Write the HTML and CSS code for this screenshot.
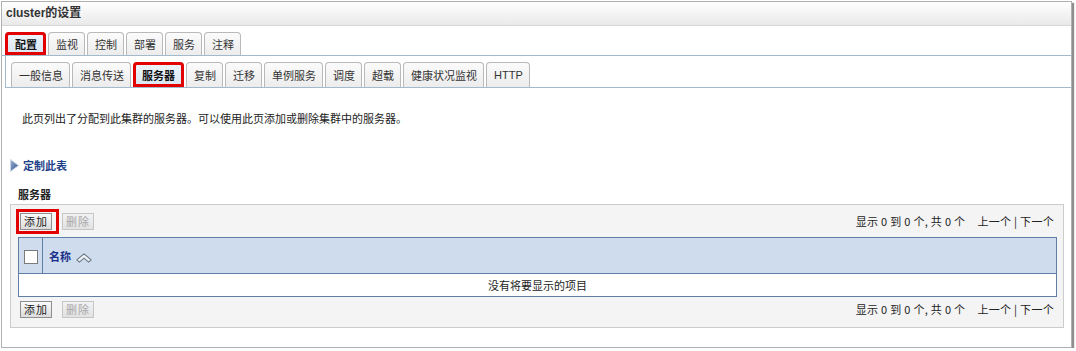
FILE: index.html
```html
<!DOCTYPE html>
<html lang="zh">
<head>
  <meta charset="UTF-8" />
  <title>cluster的设置</title>
  <link rel="stylesheet" href="styles.css">
</head>
<body>
  <div class="frame">
    <div class="title">cluster的设置</div>

    <div class="tabs">
      <div class="tab sel mark">配置</div>
      <div class="tab">监视</div>
      <div class="tab">控制</div>
      <div class="tab">部署</div>
      <div class="tab">服务</div>
      <div class="tab">注释</div>
    </div>

    <div class="subtabs">
      <div class="tab">一般信息</div>
      <div class="tab">消息传送</div>
      <div class="tab sel mark">服务器</div>
      <div class="tab">复制</div>
      <div class="tab">迁移</div>
      <div class="tab">单例服务</div>
      <div class="tab">调度</div>
      <div class="tab">超载</div>
      <div class="tab">健康状况监视</div>
      <div class="tab latin">HTTP</div>
    </div>

    <div class="content">
      <p class="desc">此页列出了分配到此集群的服务器。可以使用此页添加或删除集群中的服务器。</p>

      <div class="customize">
        <svg width="9" height="13" viewBox="0 0 9 13">
          <defs>
            <linearGradient id="tri" x1="0" y1="0" x2="1" y2="1">
              <stop offset="0" stop-color="#9db4d6"/>
              <stop offset="1" stop-color="#2d4f86"/>
            </linearGradient>
          </defs>
          <polygon points="0.5,0.5 8.5,6.5 0.5,12.5" fill="url(#tri)" stroke="#c9d4e4" stroke-width="1"/>
        </svg>
        <span>定制此表</span>
      </div>

      <h3 class="section">服务器</h3>

      <div class="panel">
        <div class="toolbar">
          <div class="buttons">
            <span class="btn-mark"><button class="btn">添加</button></span>
            <button class="btn" disabled>删除</button>
          </div>
          <div class="pager">显示 0 到 0 个, 共 0 个<span class="nav">上一个 | 下一个</span></div>
        </div>

        <table class="grid">
          <thead>
            <tr>
              <th class="check"><span class="box"></span></th>
              <th class="name">名称
                <svg width="16" height="10" viewBox="0 0 16 10">
                  <polygon points="8,0.8 15.2,6.8 12.6,9.2 8,5.2 3.4,9.2 0.8,6.8" fill="#eef1f6" stroke="#6c7888" stroke-width="1.1" stroke-linejoin="round"/>
                </svg>
              </th>
            </tr>
          </thead>
          <tbody>
            <tr><td colspan="2" class="empty">没有将要显示的项目</td></tr>
          </tbody>
        </table>

        <div class="toolbar bottom">
          <div class="buttons">
            <button class="btn">添加</button>
            <button class="btn" disabled>删除</button>
          </div>
          <div class="pager">显示 0 到 0 个, 共 0 个<span class="nav">上一个 | 下一个</span></div>
        </div>
      </div>
    </div>
  </div>
</body>
</html>
```

FILE: styles.css
```css
body {
  margin: 0;
  background: #fff;
  font-family: "Noto Sans CJK SC", "Liberation Sans", sans-serif;
  font-size: 11px;
  color: #222;
}
.frame {
  margin: 1px 0 0 1px;
  width: 1069px;
  height: 345px;
  border: 1px solid #b0b0b0;
  box-shadow: 2px 2px 1px #8e8e8e;
  background: #fff;
}
.title {
  height: 23px;
  line-height: 22px;
  padding-left: 4px;
  background: linear-gradient(#ffffff, #e9e9e9);
  border-bottom: 1px solid #d6d6d6;
  font-family: "Liberation Sans", "Noto Sans CJK SC", sans-serif;
  font-weight: bold;
  font-size: 12px;
  color: #333;
}
.tabs {
  display: flex;
  gap: 2px;
  margin-top: 5px;
  padding-left: 3px;
  border-bottom: 1px solid #a3b9cc;
  height: 24px;
  align-items: flex-end;
}
.tab {
  height: 23px;
  line-height: 22px;
  padding: 0 6px 0 7px;
  border: 1px solid #b9b9b9;
  border-bottom: none;
  border-radius: 4px 4px 0 0;
  background: linear-gradient(#fbfbfb, #ececec);
  color: #333;
  box-sizing: border-box;
}
.tab.sel {
  background: linear-gradient(#eef4fa, #d8e5f2);
  font-weight: bold;
  color: #111;
}
.tab.mark {
  outline: 3px solid #e30000;
  outline-offset: -3px;
}
.tabs .tab.mark {
  padding: 0 8px 0 9px;
}
.tab.latin {
  font-family: "Liberation Sans", sans-serif;
}
.subtabs {
  display: flex;
  gap: 2px;
  margin-left: 3px;
  padding: 6px 0 0 5px;
  height: 25px;
  border-left: 1px solid #a3b9cc;
  border-bottom: 1px solid #a3b9cc;
  align-items: flex-end;
}
.subtabs .tab {
  height: 25px;
  line-height: 24px;
}
.subtabs .tab.mark {
  padding: 0 8px;
}
.content {
  padding: 0 9px 0 9px;
}
.desc {
  margin: 20px 0 0 11px;
  height: 20px;
  line-height: 20px;
}
.customize {
  display: flex;
  align-items: center;
  gap: 4px;
  margin: 29px 0 0 -1px;
  font-weight: bold;
  color: #1e3f8a;
  font-size: 11px;
}
.section {
  margin: 12px 0 0 7px;
  height: 18px;
  line-height: 18px;
  font-size: 11px;
  font-weight: bold;
  color: #222;
}
.panel {
  margin-top: 1px;
  height: 124px;
  background: #f4f4f4;
  border: 1px solid #cccccc;
  padding: 0 6px 0 7px;
  box-sizing: border-box;
  width: 1054px;
  margin-left: -1px;
}
.toolbar {
  display: flex;
  justify-content: space-between;
  align-items: center;
  height: 32px;
  padding-left: 2px;
}
.toolbar.bottom {
  height: 28px;
  align-items: flex-start;
  padding-top: 4px;
  box-sizing: border-box;
}
.buttons {
  display: flex;
  align-items: center;
  gap: 10px;
}
.btn-mark {
  display: inline-block;
  border: 3px solid #e30000;
  padding: 1px 4px 1px 1px;
  margin: -4px -7px -4px -4px;
  line-height: 0;
}
.btn {
  width: 32px;
  height: 17px;
  padding: 0;
  font-family: "Noto Sans CJK SC", sans-serif;
  font-size: 11px;
  line-height: 15px;
  color: #222;
  background: linear-gradient(#fafafa, #dcdcdc);
  border: 1px solid #8f8f8f;
  border-radius: 0;
  letter-spacing: 1px;
}
.btn:disabled {
  color: #a8a8a8;
  border-color: #c6c6c6;
  background: linear-gradient(#f2f2f2, #e2e2e2);
}
.pager {
  padding-right: 3px;
  color: #222;
  letter-spacing: 0.3px;
}
.nav {
  margin-left: 12px;
}
.grid {
  width: 1039px;
  border-collapse: collapse;
  border: 1px solid #5f7ea6;
  background: #fff;
}
.grid th {
  height: 35px;
  background: #cfdcee;
  text-align: left;
  padding: 0;
  border-bottom: 1px solid #5f7ea6;
}
.grid th.check {
  width: 23px;
  border-right: 1px solid #5f7ea6;
  text-align: center;
}
.box {
  display: inline-block;
  width: 12px;
  height: 12px;
  border: 1px solid #7a7a7a;
  background: #fff;
  vertical-align: middle;
}
.grid th.name {
  padding-left: 6px;
  color: #1a2f8a;
  font-weight: bold;
}
.grid th.name svg {
  vertical-align: middle;
  margin-left: 2px;
}
.empty {
  height: 22px;
  text-align: center;
  padding: 0;
}
```
